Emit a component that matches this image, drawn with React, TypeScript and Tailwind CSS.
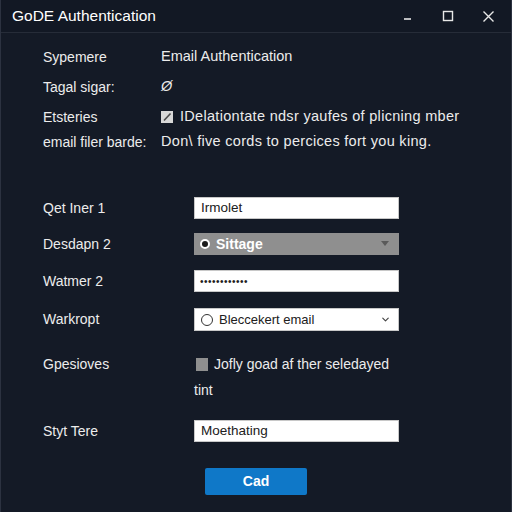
import { ChevronDown } from 'lucide-react'

const font = "font-['Liberation_Sans','Arial',sans-serif]"

function Field({ label, children, className = '' }: { label: string; children: React.ReactNode; className?: string }) {
  return (
    <div className={`flex items-center ${className}`}>
      <div className="w-[151px] shrink-0 text-[14px]">{label}</div>
      {children}
    </div>
  )
}

export default function App() {
  return (
    <div className={`w-[512px] h-[512px] bg-[#141a26] text-[#ececec] border-l border-r border-[#2c3240] flex flex-col ${font}`}>
      {/* title bar */}
      <div className="h-[33px] shrink-0 flex items-center pl-[11px] pr-[16px] border-b border-[#262c38] bg-[#121824]">
        <span className="text-[15.5px] text-white">GoDE Authentication</span>
        <div className="ml-auto flex items-center gap-[28px]">
          <svg width="12" height="12" viewBox="0 0 12 12" className="mt-[2px]">
            <line x1="2" y1="8" x2="9" y2="8" stroke="#e8e8e8" strokeWidth="1.6" />
          </svg>
          <svg width="12" height="12" viewBox="0 0 12 12">
            <rect x="1.5" y="1.5" width="9" height="9" fill="none" stroke="#e8e8e8" strokeWidth="1.4" />
          </svg>
          <svg width="13" height="13" viewBox="0 0 13 13">
            <path d="M1.5 1.5 L11.5 11.5 M11.5 1.5 L1.5 11.5" stroke="#e8e8e8" strokeWidth="1.4" />
          </svg>
        </div>
      </div>

      <div className="pl-[42px] pt-[9px] flex flex-col">
        {/* summary */}
        <div className="grid grid-cols-[118px_1fr] text-[14.5px]">
          <div className="h-[30px] flex items-center text-[14px]">Sypemere</div>
          <div className="h-[30px] flex items-center">Email Authentication</div>
          <div className="h-[30px] flex items-center text-[14px]">Tagal sigar:</div>
          <div className="h-[30px] flex items-center italic">Ø</div>
          <div className="h-[30px] flex items-center text-[14px]">Etsteries</div>
          <div className="h-[30px] flex items-center gap-[7px]">
            <svg width="12" height="12" viewBox="0 0 12 12">
              <rect x="0" y="0" width="12" height="12" fill="#d8d8d8" />
              <path d="M3 9.5 L9.5 2.5" stroke="#4a4a4a" strokeWidth="1.6" />
            </svg>
            <span className="tracking-[0.3px]">IDelationtate ndsr yaufes of plicning mber</span>
          </div>
          <div className="h-[20px] flex items-center text-[14px]">email filer barde:</div>
          <div className="h-[20px] flex items-center tracking-[0.3px]">Don\ five cords to percices fort you king.</div>
        </div>

        {/* form */}
        <div className="flex flex-col mt-[45px]">
          <Field label="Qet Iner 1">
            <div className="w-[205px] h-[22px] bg-white border border-[#c8c8c8] text-[#202020] text-[13.5px] flex items-center px-[6px]">Irmolet</div>
          </Field>
          <Field label="Desdapn 2" className="mt-[14px]">
            <div className="w-[205px] h-[22px] bg-[#8f8f8f] text-white text-[14px] font-bold flex items-center pl-[6px] pr-[10px]">
              <span className="w-[10px] h-[10px] rounded-full bg-[#1c1c1c] border-[2px] border-white mr-[6px]" />
              <span>Sittage</span>
              <svg width="8" height="6" viewBox="0 0 8 6" className="ml-auto">
                <path d="M0 0 L8 0 L4 5 Z" fill="#5a5a5a" />
              </svg>
            </div>
          </Field>
          <Field label="Watmer 2" className="mt-[15px]">
            <div className="w-[205px] h-[22px] bg-white border border-[#c8c8c8] text-[#202020] text-[10px] tracking-[0.5px] flex items-center px-[5px]">••••••••••••</div>
          </Field>
          <Field label="Warkropt" className="mt-[16px]">
            <div className="w-[205px] h-[23px] bg-white border border-[#c8c8c8] text-[#202020] text-[13px] flex items-center pl-[6px] pr-[7px]">
              <span className="w-[12px] h-[12px] rounded-full border border-[#333] mr-[6px]" />
              <span>Bleccekert email</span>
              <ChevronDown className="ml-auto w-[11px] h-[11px] text-[#444]" strokeWidth={2.5} />
            </div>
          </Field>
          <div className="flex mt-[24px]">
            <div className="w-[151px] shrink-0 text-[14px] h-[18px] flex items-center">Gpesioves</div>
            <div className="flex flex-col text-[14px]">
              <div className="h-[18px] flex items-center">
                <span className="w-[12px] h-[13px] bg-[#8f8f8f] ml-[2px] mr-[6px]" />
                <span>Jofly goad af ther seledayed</span>
              </div>
              <div className="h-[18px] mt-[8px] flex items-center">tint</div>
            </div>
          </div>
          <Field label="Styt Tere" className="mt-[21px]">
            <div className="w-[205px] h-[22px] bg-white border border-[#c8c8c8] text-[#202020] text-[13.5px] flex items-center px-[6px]">Moethating</div>
          </Field>
          <div className="mt-[26px] pl-[162px]">
            <button className="w-[102px] h-[27px] bg-[#0f78c8] text-white text-[14px] font-bold rounded-[2px]">Cad</button>
          </div>
        </div>
      </div>
    </div>
  )
}
